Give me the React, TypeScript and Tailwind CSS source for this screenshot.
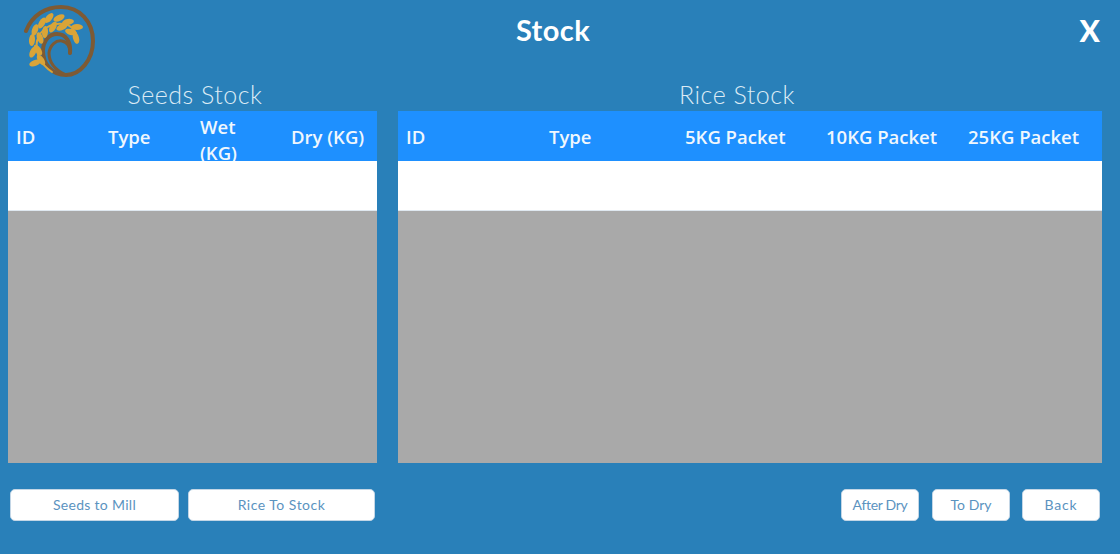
import React from "react";

const gothic = "font-['Lato','Noto_Sans',sans-serif]";
const segoe = "font-['Open_Sans','Noto_Sans',sans-serif]";

// x, y, rotation of each wheat grain
const grains = [
  [11, 59, 70],
  [9, 48, 25],
  [8, 36, 5],
  [11, 26, 20],
  [18, 19, 30],
  [25, 14, 40],
  [35, 14, 65],
  [44, 18, 80],
  [53, 23, 90],
  [52, 34, 165],
  [17, 56, -35],
  [14, 46, -35],
  [16, 34, -20],
  [21, 28, 5],
  [29, 23, 30],
  [38, 23, 65],
  [47, 28, 105],
];

const Logo = () => (
  <svg width="72" height="74" viewBox="0 0 72 74" fill="none">
    <path
      d="M2 27 C8 11 22 3 37 3 C56 3 69 18 69 37 C69 56 56 71 42 71 C28 71 19 60 19 47 C19 37 25 30 33 30 C42 30 47 38 46 49"
      stroke="#7d5a34"
      strokeWidth="4"
      strokeLinecap="round"
    />
    <path
      d="M42 71 C31 66 25 58 25 49 C26 41 32 36 38 37 C43 38 46 43 46 49"
      stroke="#7d5a34"
      strokeWidth="3"
      strokeLinecap="round"
    />
    <path
      d="M28 68 C16 60 11 48 13 37 C16 25 28 18 40 20 C46 21 50 25 52 30"
      stroke="#d9a437"
      strokeWidth="2"
      strokeLinecap="round"
    />
    {grains.map(([x, y, r], i) => (
      <ellipse
        key={i}
        cx={x}
        cy={y}
        rx="3"
        ry="6"
        fill="#d9a437"
        transform={`rotate(${r} ${x} ${y})`}
      />
    ))}
  </svg>
);

const Btn = ({ label, className }: { label: string; className: string }) => (
  <button
    className={`h-[32px] pb-[2px] rounded-[5px] bg-white border border-[#c3d6e6] text-[14px] text-[#5b93bf] ${gothic} ${className}`}
  >
    {label}
  </button>
);

const Panel = ({
  title,
  titleClass,
  cols,
  grid,
  className,
}: {
  title: string;
  titleClass: string;
  cols: { label: string; pad: string }[];
  grid: string;
  className: string;
}) => (
  <section className={`flex flex-col ${className}`}>
    <h2
      className={`h-[29px] text-center text-[25px] leading-[25px] font-light tracking-[0.5px] text-[#dcebf5] ${gothic} ${titleClass}`}
    >
      {title}
    </h2>
    <div className="h-[352px] flex flex-col bg-[#a9a9a9]">
      <div className={`h-[50px] grid ${grid} grid-rows-[50px] bg-[#1e90ff] overflow-hidden`}>
        {cols.map((c) => (
          <div
            key={c.label}
            className={`px-[8px] flex items-center text-[18.5px] leading-[26px] font-semibold text-[#f0f7fd] ${segoe} ${c.pad}`}
          >
            <span className="block">{c.label}</span>
          </div>
        ))}
      </div>
      <div className="h-[50px] bg-white border-b border-[#dfe8f0]" />
    </div>
  </section>
);

export default function App() {
  return (
    <main className="w-[1120px] h-[554px] bg-[#2980b9] flex flex-col overflow-hidden">
      <header className="h-[82px] flex items-start relative">
        <div className="pl-[24px] pt-[4px]">
          <Logo />
        </div>
        <h1
          className={`absolute left-0 right-[14px] top-[13px] text-center text-[29px] leading-[34px] font-bold tracking-[0.4px] text-white ${gothic}`}
        >
          Stock
        </h1>
        <span
          className={`absolute right-[20px] top-[13px] text-[30px] leading-[34px] font-black text-white ${gothic}`}
        >
          X
        </span>
      </header>

      <div className="flex gap-[21px] px-[8px]">
        <Panel
          title="Seeds Stock"
          titleClass="pl-[5px]"
          cols={[
            { label: "ID", pad: "pt-[2px]" },
            { label: "Type", pad: "pt-[2px]" },
            { label: "Wet (KG)", pad: "pt-[8px]" },
            { label: "Dry (KG)", pad: "pt-[2px]" },
          ]}
          grid="grid-cols-[92px_92px_91px_94px]"
          className="w-[369px]"
        />
        <Panel
          title="Rice Stock"
          titleClass="pr-[26px]"
          cols={[
            { label: "ID", pad: "pt-[2px]" },
            { label: "Type", pad: "pt-[2px]" },
            { label: "5KG Packet", pad: "pt-[2px]" },
            { label: "10KG Packet", pad: "pt-[2px]" },
            { label: "25KG Packet", pad: "pt-[2px]" },
          ]}
          grid="grid-cols-[143px_136px_141px_142px_142px]"
          className="w-[704px]"
        />
      </div>

      <footer className="mt-[26px] flex items-center pl-[10px] pr-[20px]">
        <Btn label="Seeds to Mill" className="w-[169px] tracking-[0.3px]" />
        <Btn label="Rice To Stock" className="w-[187px] ml-[9px] tracking-[0.5px]" />
        <div className="ml-auto flex gap-[12px]">
          <Btn label="After Dry" className="w-[78px] tracking-[-0.3px]" />
          <Btn label="To Dry" className="w-[78px] ml-[1px]" />
          <Btn label="Back" className="w-[78px] tracking-[0.8px]" />
        </div>
      </footer>
    </main>
  );
}
